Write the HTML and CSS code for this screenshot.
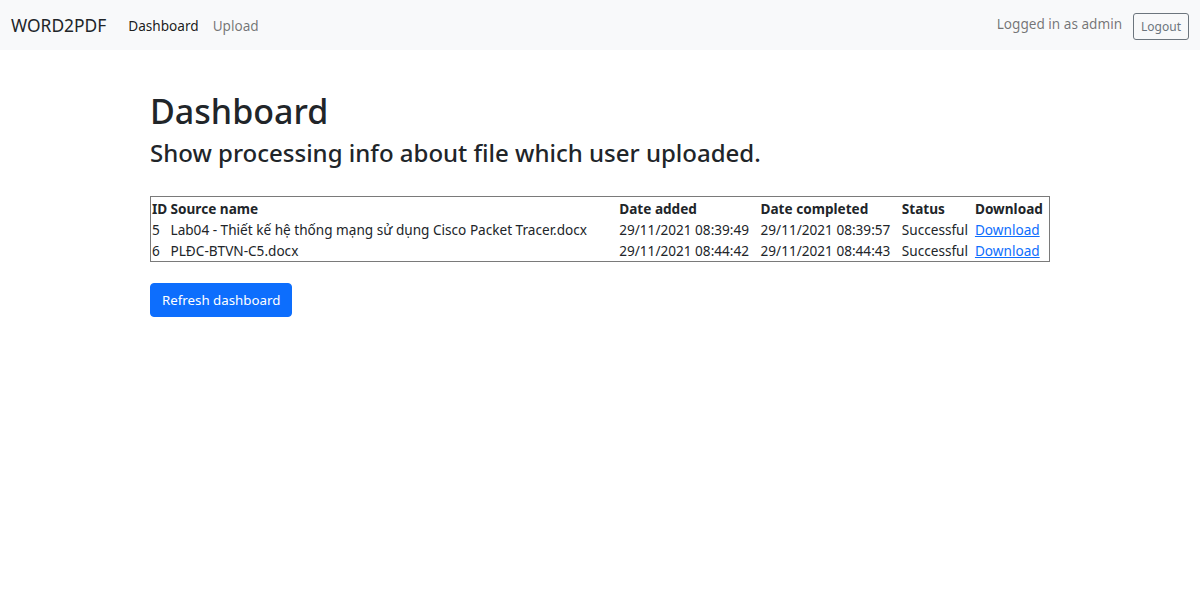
FILE: index.html
```html
<!DOCTYPE html>
<html>
<head>
<meta charset="utf-8">
<title>WORD2PDF</title>
<link rel="stylesheet" href="styles.css">
</head>
<body>
<nav class="navbar">
  <div class="nav-left">
    <a class="brand" href="#">WORD2PDF</a>
    <a class="nav-link active" href="#">Dashboard</a>
    <a class="nav-link" href="#">Upload</a>
  </div>
  <div class="nav-right">
    <span class="nav-text">Logged in as admin</span>
    <button class="btn-logout">Logout</button>
  </div>
</nav>
<main class="container">
  <h1 class="title">Dashboard</h1>
  <h3 class="subtitle">Show processing info about file which user uploaded.</h3>
  <table class="files">
    <thead>
      <tr><th>ID</th><th>Source name</th><th>Date added</th><th>Date completed</th><th>Status</th><th>Download</th></tr>
    </thead>
    <tbody>
      <tr><td>5</td><td>Lab04 - Thiết kế hệ thống mạng sử dụng Cisco Packet Tracer.docx</td><td>29/11/2021 08:39:49</td><td>29/11/2021 08:39:57</td><td>Successful</td><td><a href="#">Download</a></td></tr>
      <tr><td>6</td><td>PLĐC-BTVN-C5.docx</td><td>29/11/2021 08:44:42</td><td>29/11/2021 08:44:43</td><td>Successful</td><td><a href="#">Download</a></td></tr>
    </tbody>
  </table>
  <button class="btn-primary">Refresh dashboard</button>
</main>
</body>
</html>
```

FILE: styles.css
```css
* { box-sizing: border-box; }
html, body { margin: 0; padding: 0; }
body {
  font-family: "Noto Sans", "Open Sans", sans-serif;
  font-size: 13.6px;
  color: #212529;
  background: #fff;
}
.navbar {
  height: 50px;
  background: #f8f9fa;
  display: flex;
  align-items: center;
  justify-content: space-between;
  padding: 0 11px;
}
.nav-left, .nav-right { display: flex; align-items: center; }
.brand {
  font-size: 17.4px;
  color: #212529;
  text-decoration: none;
  margin-right: 22px;
}
.nav-link {
  font-size: 13.6px;
  color: rgba(0,0,0,.55);
  text-decoration: none;
  margin-right: 14px;
}
.nav-link.active { color: rgba(0,0,0,.9); }
.nav-text {
  font-size: 13.6px;
  color: rgba(0,0,0,.55);
  margin-right: 11px;
  position: relative;
  top: -2px;
}
.btn-logout {
  font-family: inherit;
  font-size: 12px;
  color: #6c757d;
  background: transparent;
  border: 1px solid #6c757d;
  border-radius: 3px;
  height: 27px;
  padding: 0 7px;
  position: relative;
  top: 1px;
}
.container {
  width: 900px;
  margin: 0 auto;
  padding-top: 40px;
}
.title {
  font-size: 34px;
  font-weight: 500;
  line-height: 42px;
  margin: 0 0 6px;
}
.subtitle {
  font-size: 24px;
  font-weight: 500;
  line-height: 30px;
  margin: 0 0 28px;
}
.files {
  width: 100%;
  border-collapse: collapse;
  border: 1px solid #7a7a7a;
  margin-bottom: 21px;
}
.files th, .files td {
  text-align: left;
  padding: 0 1px;
  line-height: 21px;
  white-space: nowrap;
}
.files thead th { padding-top: 1px; }
.files th { font-weight: 700; }
.files a { color: #0d6efd; }
.btn-primary {
  font-family: inherit;
  font-size: 13.3px;
  color: #fff;
  background: #0d6efd;
  border: 1px solid #0d6efd;
  border-radius: 4px;
  height: 34px;
  padding: 0 11px;
}
```
